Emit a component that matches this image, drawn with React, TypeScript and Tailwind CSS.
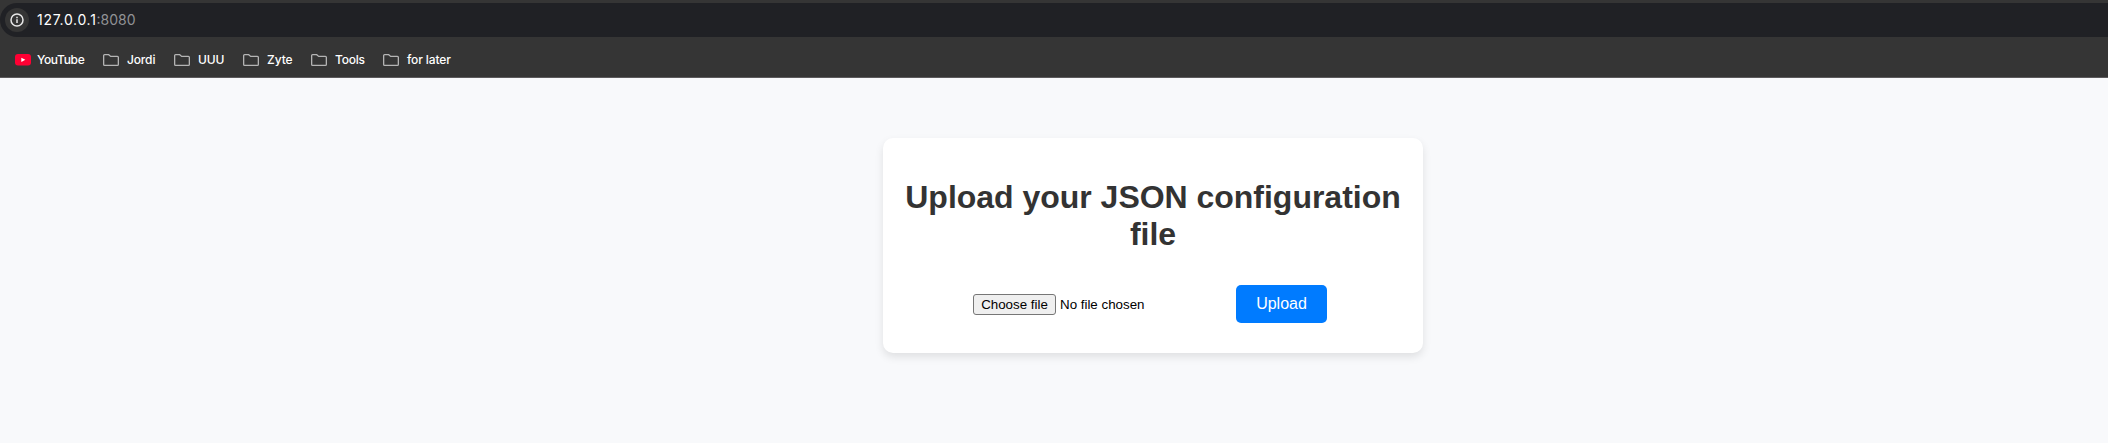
import React from 'react';

const folders = [
  { name: 'Jordi', box: 'w-[71px]', text: 'tracking-[-0.15px]' },
  { name: 'UUU', box: 'w-[69px]', text: 'tracking-[-0.1px]' },
  { name: 'Zyte', box: 'w-[68px]', text: 'tracking-[-0.05px]' },
  { name: 'Tools', box: 'w-[72px]', text: 'tracking-[-0.25px]' },
  { name: 'for later', box: 'w-[80px]', text: 'tracking-[-0.12px]' },
];

function InfoIcon() {
  return (
    <svg width="14" height="14" viewBox="0 0 14 14" fill="none">
      <circle cx="7" cy="7" r="6" stroke="#e8e8e8" strokeWidth="1.5" />
      <path d="M7 6.2V10" stroke="#e8e8e8" strokeWidth="1.5" />
      <path d="M7 3.7V5.2" stroke="#e8e8e8" strokeWidth="1.5" />
    </svg>
  );
}

function FolderIcon() {
  return (
    <svg width="16" height="12" viewBox="0 0 16 12" fill="none">
      <path
        d="M1.6 0.65H5.7L7.7 2.4H14.4Q15.35 2.4 15.35 3.3V10.4Q15.35 11.35 14.4 11.35H1.6Q0.65 11.35 0.65 10.4V1.6Q0.65 0.65 1.6 0.65Z"
        stroke="#b4b4b4"
        strokeWidth="1.3"
      />
    </svg>
  );
}

function YouTubeIcon() {
  return (
    <svg width="16" height="12" viewBox="0 0 16 12">
      <rect width="16" height="11.5" rx="3" fill="#ff0033" />
      <path d="M6.3 3.7L10.3 5.8L6.3 7.9Z" fill="#fff" />
    </svg>
  );
}

export default function App() {
  return (
    <div className="flex h-[443px] w-full flex-col overflow-hidden bg-[#f8f9fb] font-['Liberation_Sans',Arial,sans-serif]">
      <header className="h-[78px] shrink-0 border-b border-[#5c5a5c] bg-[#353535] pt-[3px] font-[Inter,sans-serif] text-white">
        <div className="flex h-[34px] items-center rounded-l-full bg-[#202125] pl-[5px]">
          <span className="flex size-6 items-center justify-center rounded-full bg-[#353535]">
            <InfoIcon />
          </span>
          <span className="ml-2 text-[14px] leading-[20px]">
            <span className="tracking-[0.7px]">127.0.0.1</span>
            <span className="text-[#919295]">:8080</span>
          </span>
        </div>
        <nav className="flex h-10 items-center pt-[5px] pl-[15px] text-[12px] leading-[16px] font-medium">
          <div className="flex w-[88px] items-center gap-[6px]">
            <YouTubeIcon />
            <span className="tracking-[-0.35px]">YouTube</span>
          </div>
          {folders.map((f) => (
            <div key={f.name} className={`flex items-center gap-2 whitespace-nowrap ${f.box}`}>
              <FolderIcon />
              <span className={f.text}>{f.name}</span>
            </div>
          ))}
        </nav>
      </header>
      <main className="flex justify-center pt-[60px] pl-[198px]">
        <section className="h-[215px] w-[540px] rounded-[10px] bg-white px-5 pt-[41px] shadow-[0_4px_8px_rgba(0,0,0,0.1)]">
          <h1 className="text-center text-[32px] leading-[37px] font-bold tracking-[-0.02px] text-[#333333]">
            Upload your JSON configuration file
          </h1>
          <form className="mt-8 flex items-center pl-[70px]" onSubmit={(e) => e.preventDefault()}>
            <div className="mt-px flex w-[263px] items-center gap-1 text-[13.333px] leading-[15px] text-black">
              <button type="button" className="h-[21px] w-[83px] rounded-[3px] border border-[#767676] bg-[#efefef] whitespace-nowrap">
                Choose file
              </button>
              <span>No file chosen</span>
            </div>
            <button type="submit" className="h-[38px] w-[91px] rounded-[5px] bg-[#007bff] text-[16px] leading-[18px] text-white">
              Upload
            </button>
          </form>
        </section>
      </main>
    </div>
  );
}
